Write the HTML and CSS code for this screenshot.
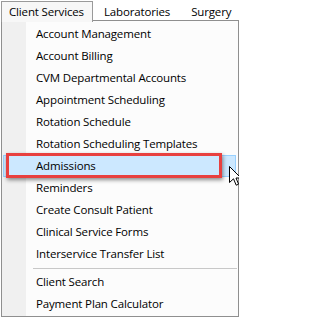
FILE: index.html
```html
<!DOCTYPE html>
<html>
<head>
<meta charset="utf-8">
<link rel="stylesheet" href="styles.css">
</head>
<body>
<div class="menubar">
  <div class="tab open">Client Services</div>
  <div class="tab">Laboratories</div>
  <div class="tab">Surgery</div>
</div>
<div class="dropdown">
  <div class="item">Account Management</div>
  <div class="item">Account Billing</div>
  <div class="item">CVM Departmental Accounts</div>
  <div class="item">Appointment Scheduling</div>
  <div class="item">Rotation Schedule</div>
  <div class="item">Rotation Scheduling Templates</div>
  <div class="item active">Admissions</div>
  <div class="item">Reminders</div>
  <div class="item">Create Consult Patient</div>
  <div class="item">Clinical Service Forms</div>
  <div class="item">Interservice Transfer List</div>
  <div class="separator"></div>
  <div class="item">Client Search</div>
  <div class="item">Payment Plan Calculator</div>
</div>
<div class="annotation"></div>
<svg class="cursor" width="13" height="21" viewBox="0 0 13 21">
  <path d="M0.5 0.5 L0.5 16.5 L4.5 12.8 L7.2 19.2 L9.6 18.2 L7 12 L12 12 Z" fill="#fff" stroke="#000" stroke-width="1" stroke-linejoin="miter"/>
</svg>
</body>
</html>
```

FILE: styles.css
```css
html, body {
  margin: 0;
  padding: 0;
  background: #ffffff;
}
body {
  width: 239px;
  height: 317px;
  overflow: hidden;
  position: relative;
  font-family: "Open Sans", "Noto Sans", sans-serif;
  font-size: 11.5px;
  letter-spacing: -0.15px;
  color: #000;
}
.menubar {
  display: flex;
  align-items: flex-start;
  height: 20px;
  position: relative;
  z-index: 2;
}
.tab {
  margin-top: 1px;
  height: 19px;
  line-height: 19px;
  padding: 0 9px 0 10px;
  border: 1px solid transparent;
  border-bottom: none;
  white-space: nowrap;
}
.tab:first-child {
  margin-left: 1px;
}
.tab.open {
  background: #f7f7f7;
  border-color: #9a9a9a;
  height: 20px;
  padding: 0 8px 0 7px;
}
.dropdown {
  margin-left: 1px;
  width: 236px;
  height: 293px;
  border: 1px solid #8f8f8f;
  padding-top: 2px;
  background: linear-gradient(to right, #f0f0f0 0, #f0f0f0 24px, #fcfcfc 24px);
}
.item {
  height: 20px;
  line-height: 20px;
  margin: 0 2px 0 1px;
  padding-left: 32px;
  border: 1px solid transparent;
  white-space: nowrap;
}
.item.active {
  background: #cce8ff;
  border-color: #99d1ff;
}
.separator {
  height: 6px;
  margin-left: 31px;
  margin-right: 1px;
  background: linear-gradient(#c8c8c8, #c8c8c8) 0 3px / 100% 1px no-repeat;
}
.annotation {
  position: absolute;
  left: 6px;
  top: 153px;
  width: 210px;
  height: 19px;
  border: 3px solid #e8403f;
  box-shadow: 1px 2px 4px rgba(0, 0, 0, 0.45);
}
.cursor {
  position: absolute;
  left: 229px;
  top: 166px;
}
```
